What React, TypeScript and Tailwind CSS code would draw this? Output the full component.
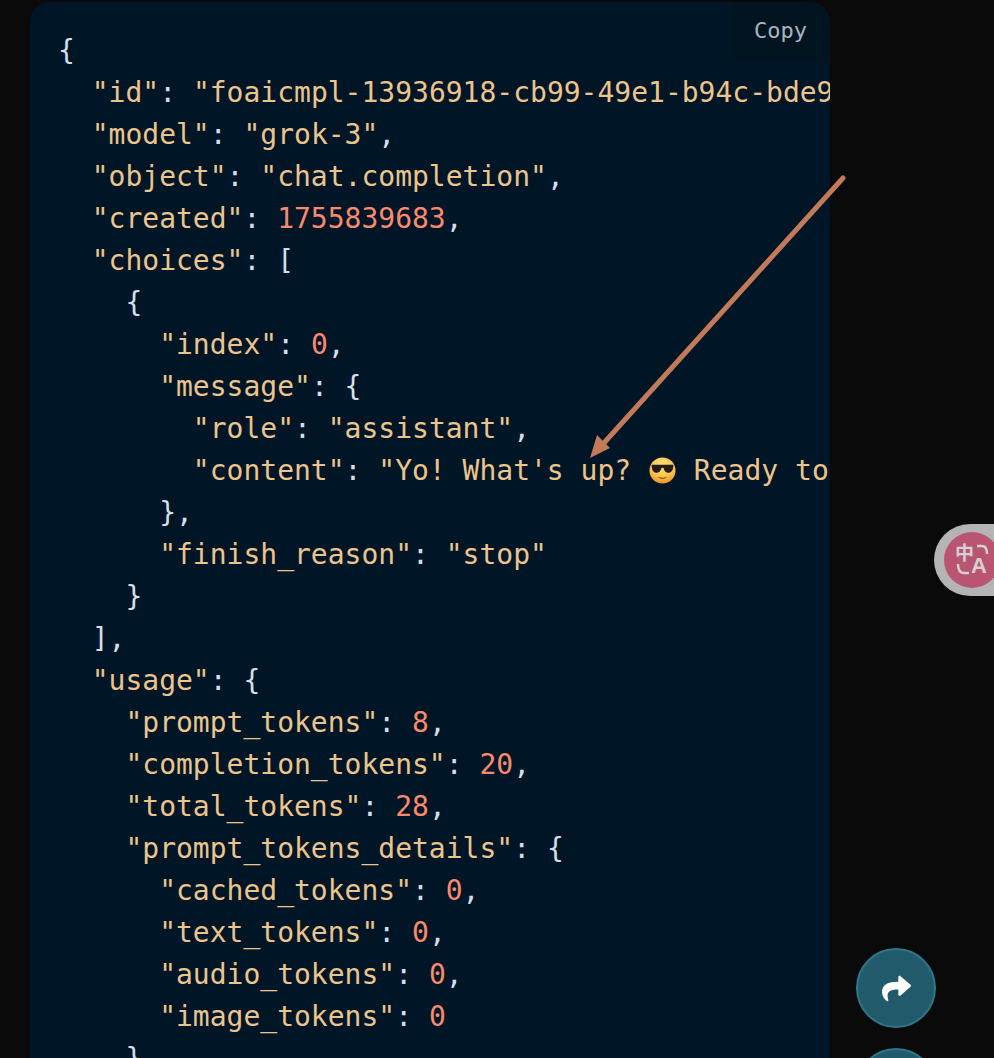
import { FaShare } from "react-icons/fa";

type Tok = { t: string; c?: "s" | "n" };

const s = (t: string): Tok => ({ t, c: "s" });
const n = (t: string): Tok => ({ t, c: "n" });
const p = (t: string): Tok => ({ t });

const lines: Tok[][] = [
  [p("{")],
  [p("  "), s('"id"'), p(": "), s('"foaicmpl-13936918-cb99-49e1-b94c-bde9a07c51f2"'), p(",")],
  [p("  "), s('"model"'), p(": "), s('"grok-3"'), p(",")],
  [p("  "), s('"object"'), p(": "), s('"chat.completion"'), p(",")],
  [p("  "), s('"created"'), p(": "), n("1755839683"), p(",")],
  [p("  "), s('"choices"'), p(": [")],
  [p("    {")],
  [p("      "), s('"index"'), p(": "), n("0"), p(",")],
  [p("      "), s('"message"'), p(": {")],
  [p("        "), s('"role"'), p(": "), s('"assistant"'), p(",")],
  [],
  [p("      },")],
  [p("      "), s('"finish_reason"'), p(": "), s('"stop"')],
  [p("    }")],
  [p("  ],")],
  [p("  "), s('"usage"'), p(": {")],
  [p("    "), s('"prompt_tokens"'), p(": "), n("8"), p(",")],
  [p("    "), s('"completion_tokens"'), p(": "), n("20"), p(",")],
  [p("    "), s('"total_tokens"'), p(": "), n("28"), p(",")],
  [p("    "), s('"prompt_tokens_details"'), p(": {")],
  [p("      "), s('"cached_tokens"'), p(": "), n("0"), p(",")],
  [p("      "), s('"text_tokens"'), p(": "), n("0"), p(",")],
  [p("      "), s('"audio_tokens"'), p(": "), n("0"), p(",")],
  [p("      "), s('"image_tokens"'), p(": "), n("0")],
  [p("    }")],
];

function Token({ tok }: { tok: Tok }) {
  if (tok.c === "s") return <span className="text-[#ecc48d]">{tok.t}</span>;
  if (tok.c === "n") return <span className="text-[#f98a6e]">{tok.t}</span>;
  return <span>{tok.t}</span>;
}

// sunglasses face, no colour emoji font to lean on
function CoolFace() {
  return (
    <svg viewBox="0 0 30 30" className="inline-block mx-[1px] w-[27px] h-[27px] align-[-4px]">
      <defs>
        <radialGradient id="face" cx="50%" cy="30%" r="75%">
          <stop offset="0%" stopColor="#ffe27a" />
          <stop offset="60%" stopColor="#fcc34c" />
          <stop offset="100%" stopColor="#ec8a1f" />
        </radialGradient>
      </defs>
      <circle cx="15" cy="15" r="14.5" fill="url(#face)" />
      <path d="M3 8.5 H27 V10.5 C26.5 15.5 24.5 17.5 21 17.5 C18 17.5 16.8 14.5 16 12 H14 C13.2 14.5 12 17.5 9 17.5 C5.5 17.5 3.5 15.5 3 10.5 Z" fill="#221d1c" />
      <path d="M10 22 C13 23.5 17 23.5 20 22 C18.5 25 11.5 25 10 22 Z" fill="#7d4310" />
    </svg>
  );
}

function App() {
  return (
    <div className="relative h-[1058px] overflow-hidden bg-[#0a0a0a]">
      <div className="pl-[30px] pt-[2px]">
        <div className="relative w-[800px] h-[1056px] overflow-hidden rounded-t-[20px] bg-[#001626]">
          <pre className="pt-[28px] pl-[28px] font-['DejaVu_Sans_Mono',monospace] text-[28px] leading-[42px] text-[#d3dfea]">
            {lines.map((line, i) =>
              i === 10 ? (
                <div key={i} className="h-[42px] whitespace-pre">
                  {"        "}
                  <span className="text-[#ecc48d]">"content"</span>
                  {": "}
                  <span className="text-[#ecc48d]">
                    "Yo! What's up? <CoolFace /> Ready to help you with anything today!"
                  </span>
                </div>
              ) : (
                <div key={i} className="h-[42px] whitespace-pre">
                  {line.map((tok, j) => (
                    <Token key={j} tok={tok} />
                  ))}
                </div>
              )
            )}
          </pre>
          <button className="absolute right-0 top-0 w-[97px] h-[58px] rounded-bl-[10px] bg-[#01141f] pb-[2px] pr-[2px] font-['DejaVu_Sans_Mono',monospace] text-[22px] text-[#a6b4c2]">
            Copy
          </button>
        </div>
      </div>

      {/* annotation arrow */}
      <svg className="absolute left-0 top-0 pointer-events-none" width="994" height="1058">
        <path d="M843 178 L603 444" stroke="#c27a58" strokeWidth="5" strokeLinecap="round" fill="none" />
        <path d="M590 458 L597 435 L610 448 Z" fill="#c27a58" />
      </svg>

      {/* translate widget */}
      <div className="absolute left-[934px] top-[524px] w-[80px] h-[72px] rounded-l-[36px] bg-[#b4b4b4] pl-[10px] pt-[8px]">
        <div className="relative w-[56px] h-[56px] rounded-full bg-[#b95571] text-[#d6d0d2] overflow-hidden">
          <span className="absolute left-[11px] top-[7px] font-['Noto_Sans_CJK_SC',sans-serif] text-[19px] leading-[26px] font-bold">中</span>
          <span className="absolute left-[27px] top-[20px] font-['Liberation_Sans',sans-serif] text-[22px] leading-[28px] font-bold">A</span>
          <svg className="absolute left-0 top-0" width="56" height="56" fill="none" stroke="#d6d0d2" strokeWidth="2.5">
            <path d="M33 14 H38 Q43 14 43 22" />
            <path d="M14 32 Q14 41 20 41 H25" />
          </svg>
        </div>
      </div>

      {/* floating buttons */}
      <div className="absolute left-[856px] top-[948px] flex flex-col gap-[20px]">
        <button className="flex items-center justify-center w-[80px] h-[80px] rounded-full border-2 border-[#2d788c] bg-[#215b6b] text-white">
          <FaShare className="w-[29px] h-[29px]" />
        </button>
        <button className="w-[80px] h-[80px] rounded-full border-2 border-[#2d788c] bg-[#215b6b]" />
      </div>
    </div>
  );
}

export default App;
